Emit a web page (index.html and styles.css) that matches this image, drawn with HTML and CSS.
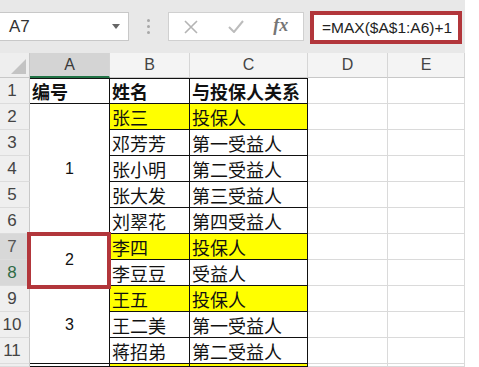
FILE: index.html
```html
<!DOCTYPE html>
<html lang="zh">
<head>
<meta charset="utf-8">
<title>Excel 合并单元格序号</title>
<link rel="stylesheet" href="styles.css">
</head>
<body>
<div class="app">
  <div class="toolbar">
    <div class="namebox">
      <span>A7</span>
      <svg class="drop" width="8" height="5" viewBox="0 0 8 5"><polygon points="0,0 8,0 4,5" fill="#666"/></svg>
    </div>
    <div class="sep"><i></i><i></i><i></i></div>
    <div class="fbtns">
      <span class="btn"><svg width="14" height="14" viewBox="0 0 14 14"><path d="M1 1 L13 13 M13 1 L1 13" stroke="#b4b4b4" stroke-width="1.6" fill="none"/></svg></span>
      <span class="btn"><svg width="16" height="13" viewBox="0 0 16 13"><path d="M1 7 L6 12 L15 1" stroke="#bcbcbc" stroke-width="2" fill="none"/></svg></span>
      <span class="btn fx">fx</span>
    </div>
    <div class="formula">=MAX($A$1:A6)+1</div>
  </div>

  <div class="sheet">
    <div class="corner"><svg width="15" height="15" viewBox="0 0 15 15"><polygon points="15,0 15,15 0,15" fill="#c3c3c3"/></svg></div>
    <div class="ch sel">A</div>
    <div class="ch">B</div>
    <div class="ch">C</div>
    <div class="ch">D</div>
    <div class="ch">E</div>

    <div class="rh">1</div>
    <div class="c top b">编号</div>
    <div class="c top b">姓名</div>
    <div class="c top b">与投保人关系</div>
    <div class="e"></div><div class="e"></div>

    <div class="rh">2</div>
    <div class="c num span5">1</div>
    <div class="c y">张三</div>
    <div class="c y">投保人</div>
    <div class="e"></div><div class="e"></div>

    <div class="rh">3</div>
    <div class="c">邓芳芳</div>
    <div class="c">第一受益人</div>
    <div class="e"></div><div class="e"></div>

    <div class="rh">4</div>
    <div class="c">张小明</div>
    <div class="c">第二受益人</div>
    <div class="e"></div><div class="e"></div>

    <div class="rh">5</div>
    <div class="c">张大发</div>
    <div class="c">第三受益人</div>
    <div class="e"></div><div class="e"></div>

    <div class="rh">6</div>
    <div class="c">刘翠花</div>
    <div class="c">第四受益人</div>
    <div class="e"></div><div class="e"></div>

    <div class="rh sel">7</div>
    <div class="c num span2 mark">2</div>
    <div class="c y">李四</div>
    <div class="c y">投保人</div>
    <div class="e"></div><div class="e"></div>

    <div class="rh sel g">8</div>
    <div class="c">李豆豆</div>
    <div class="c">受益人</div>
    <div class="e"></div><div class="e"></div>

    <div class="rh">9</div>
    <div class="c num span3">3</div>
    <div class="c y">王五</div>
    <div class="c y">投保人</div>
    <div class="e"></div><div class="e"></div>

    <div class="rh">10</div>
    <div class="c">王二美</div>
    <div class="c">第一受益人</div>
    <div class="e"></div><div class="e"></div>

    <div class="rh">11</div>
    <div class="c">蒋招弟</div>
    <div class="c">第二受益人</div>
    <div class="e"></div><div class="e"></div>

    <div class="rh"></div>
    <div class="c"></div>
    <div class="c y"></div>
    <div class="c y"></div>
    <div class="e"></div><div class="e"></div>
  </div>
</div>
</body>
</html>
```

FILE: styles.css
```css
html, body {
  margin: 0;
  padding: 0;
}
body {
  width: 479px;
  height: 367px;
  overflow: hidden;
  background: #ffffff;
  font-family: "Liberation Sans", "Noto Sans CJK SC", sans-serif;
}
.app {
  width: 465px;
}

/* formula bar */
.toolbar {
  height: 53px;
  background: #e8e8e8;
  display: flex;
  align-items: center;
}
.namebox {
  width: 129px;
  height: 29px;
  box-sizing: border-box;
  background: #ffffff;
  border: 1px solid #c8c8c8;
  border-left: none;
  display: flex;
  align-items: center;
  justify-content: space-between;
  padding: 0 8px 0 9px;
  font-size: 17px;
  color: #333333;
}
.sep {
  width: 39px;
  display: flex;
  flex-direction: column;
  align-items: center;
  gap: 3px;
}
.sep i {
  display: block;
  width: 3px;
  height: 3px;
  border-radius: 50%;
  background: #a8a8a8;
}
.fbtns {
  width: 136px;
  height: 29px;
  box-sizing: border-box;
  background: #ffffff;
  border: 1px solid #d0d0d0;
  display: flex;
  align-items: center;
}
.btn {
  flex: 1;
  display: flex;
  align-items: center;
  justify-content: center;
}
.fx {
  font-family: "Liberation Serif", serif;
  font-style: italic;
  font-weight: bold;
  font-size: 18px;
  color: #767676;
  padding-bottom: 2px;
}
.formula {
  margin-left: 6px;
  margin-top: 2px;
  width: 152px;
  height: 33px;
  box-sizing: border-box;
  border: 4px solid #b2363b;
  background: #ffffff;
  display: flex;
  align-items: center;
  padding-left: 8px;
  font-size: 15.5px;
  color: #222222;
  white-space: nowrap;
}

/* sheet grid */
.sheet {
  display: grid;
  grid-template-columns: 30px 80px 80px 118px 80px 77px;
  grid-template-rows: 25px repeat(11, 26px) 3px;
}
.sheet > div {
  box-sizing: border-box;
}
.corner {
  background: #eeeeee;
  border-right: 1px solid #c8c8c8;
  border-bottom: 1px solid #c8c8c8;
  display: flex;
  align-items: flex-end;
  justify-content: flex-end;
  padding: 0 3px 3px 0;
}
.ch {
  background: #f4f4f4;
  border-right: 1px solid #d6d6d6;
  border-bottom: 1px solid #c8c8c8;
  display: flex;
  align-items: center;
  justify-content: center;
  font-size: 16px;
  color: #444444;
}
.ch.sel {
  background: #d4d4d4;
  border-bottom: 2px solid #217346;
  color: #3a3a3a;
}
.rh {
  background: #efefef;
  border-right: 1px solid #c8c8c8;
  border-bottom: 1px solid #dcdcdc;
  display: flex;
  align-items: center;
  justify-content: center;
  padding-right: 5px;
  font-size: 17px;
  color: #444444;
}
.rh.sel {
  background: #d8d8d8;
  color: #555555;
}
.rh.sel.g {
  color: #2f6b45;
}
.c {
  border-right: 1px solid #111111;
  border-bottom: 1px solid #111111;
  display: flex;
  align-items: center;
  padding-left: 2px;
  font-family: "Noto Sans CJK SC", sans-serif;
  font-size: 18px;
  color: #111111;
  white-space: nowrap;
  overflow: hidden;
}
.c.top {
  border-top: 1px solid #111111;
}
.b {
  font-weight: bold;
}
.y {
  background: #ffff00;
}
.num {
  justify-content: center;
  padding-left: 0;
  font-family: "Liberation Sans", sans-serif;
  font-size: 16px;
}
.span5 { grid-row: span 5; }
.span3 { grid-row: span 3; }
.span2 { grid-row: span 2; }
.mark {
  position: relative;
  overflow: visible;
}
.mark::after {
  content: "";
  position: absolute;
  top: -2px;
  left: -3px;
  right: -2px;
  bottom: -4px;
  border: 4px solid #b2363b;
}
.e {
  border-right: 1px solid #dadada;
  border-bottom: 1px solid #dadada;
}
```
